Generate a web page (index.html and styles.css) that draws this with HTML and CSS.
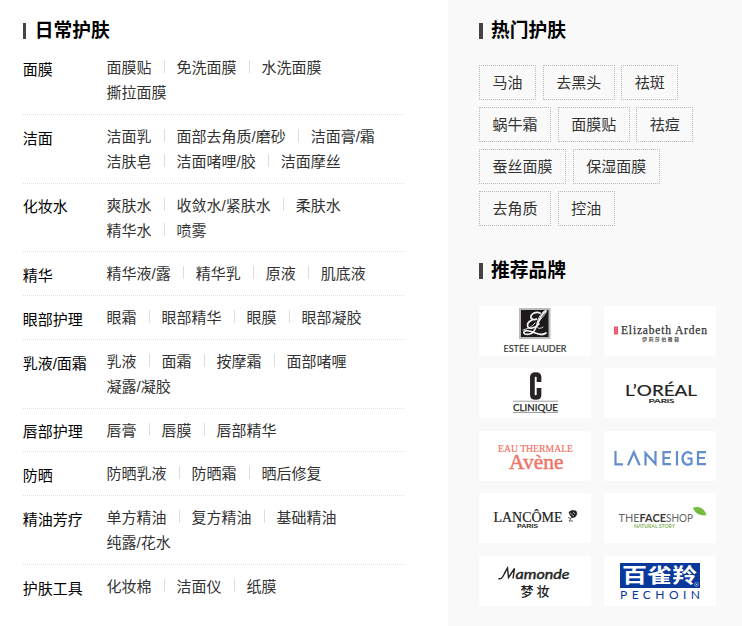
FILE: index.html
```html
<!DOCTYPE html>
<html lang="zh-CN">
<head>
<meta charset="utf-8">
<title>护肤</title>
<link rel="stylesheet" href="styles.css">
</head>
<body>
<div class="page">
  <main class="daily">
    <h2 class="title">日常护肤</h2>
    <dl class="category"><dt>面膜</dt><dd><p><a>面膜贴</a><a>免洗面膜</a><a>水洗面膜</a></p><p><a>撕拉面膜</a></p></dd></dl>
    <dl class="category"><dt>洁面</dt><dd><p><a>洁面乳</a><a>面部去角质/磨砂</a><a>洁面膏/霜</a></p><p><a>洁肤皂</a><a>洁面啫哩/胶</a><a>洁面摩丝</a></p></dd></dl>
    <dl class="category"><dt>化妆水</dt><dd><p><a>爽肤水</a><a>收敛水/紧肤水</a><a>柔肤水</a></p><p><a>精华水</a><a>喷雾</a></p></dd></dl>
    <dl class="category"><dt>精华</dt><dd><p><a>精华液/露</a><a>精华乳</a><a>原液</a><a>肌底液</a></p></dd></dl>
    <dl class="category"><dt>眼部护理</dt><dd><p><a>眼霜</a><a>眼部精华</a><a>眼膜</a><a>眼部凝胶</a></p></dd></dl>
    <dl class="category"><dt>乳液/面霜</dt><dd><p><a>乳液</a><a>面霜</a><a>按摩霜</a><a>面部啫喱</a></p><p><a>凝露/凝胶</a></p></dd></dl>
    <dl class="category"><dt>唇部护理</dt><dd><p><a>唇膏</a><a>唇膜</a><a>唇部精华</a></p></dd></dl>
    <dl class="category"><dt>防晒</dt><dd><p><a>防晒乳液</a><a>防晒霜</a><a>晒后修复</a></p></dd></dl>
    <dl class="category"><dt>精油芳疗</dt><dd><p><a>单方精油</a><a>复方精油</a><a>基础精油</a></p><p><a>纯露/花水</a></p></dd></dl>
    <dl class="category"><dt>护肤工具</dt><dd><p><a>化妆棉</a><a>洁面仪</a><a>纸膜</a></p></dd></dl>
  </main>
  <aside class="side">
    <h2 class="title">热门护肤</h2>
    <div class="tags">
      <a>马油</a><a>去黑头</a><a>祛斑</a><a>蜗牛霜</a><a>面膜贴</a><a>祛痘</a><a>蚕丝面膜</a><a>保湿面膜</a><a>去角质</a><a>控油</a>
    </div>
    <h2 class="title">推荐品牌</h2>
    <div class="brands">
      <svg viewBox="0 0 112 50">
        <rect x="40" y="2" width="31.500" height="31" fill="#bbb"/><rect x="42" y="4" width="27.500" height="27" fill="#1d1a19"/>
        <g fill="none" stroke="#f3f3f3" stroke-linecap="round"><path stroke-width="1.700" d="M61 7c-4-2-10 1-9 5 1 2 4 2 6 1-6 0-11 4-9 8 2 3 8 0 11-3M67 5c-6 3-8 14-12 20-2 3-6 4-9 3-3-2 0-4 4-3 6 1 12 6 17 2"/><path stroke-width=".9" d="M59 17c3-5 9-10 8-12s-7 4-9 12c-1 5 2 7 6 4M44 24c6-2 9-3 12-7"/></g>
        <text class="light" x="24.500" y="46.300" font-size="9.800" textLength="63" lengthAdjust="spacingAndGlyphs" fill="#333" stroke="#333" stroke-width=".2">ESTĒE LAUDER</text>
      </svg>
      <svg viewBox="0 0 112 50">
        <rect x="10" y="20.500" width="4" height="8" fill="#f0526f"/><path d="M11 22.500h2M11 24.500h2M11 26.500h2" stroke="#fff" stroke-width=".4" stroke-opacity=".5"/>
        <text class="serif" x="17" y="28" font-size="11.500" textLength="86" fill="#333" stroke="#333" stroke-width=".25">Elizabeth Arden</text>
        <text class="cjk" x="38" y="35.300" font-size="5" font-weight="700" textLength="37" fill="#555">伊莉莎伯雅顿</text>
      </svg>
      <svg viewBox="0 0 112 50">
        <path d="M60 14V9q0-2.500-3.300-2.500T53.400 9v18q0 2.500 3.300 2.500T60 27v-7" fill="none" stroke="#282322" stroke-width="4.700"/>
        <path d="M34 33.200h45M34 44.500h45" stroke="#888" stroke-width=".8"/>
        <text class="light" x="34" y="42.500" font-size="10.300" textLength="45" lengthAdjust="spacingAndGlyphs" fill="#222" stroke="#222" stroke-width=".25">CLINIQUE</text>
      </svg>
      <svg viewBox="0 0 112 50">
        <text class="light" x="21" y="28.200" font-size="16" textLength="72" lengthAdjust="spacingAndGlyphs" fill="#222" stroke="#222" stroke-width=".2">L’ORÉAL</text>
        <text class="light" x="44.500" y="35.300" font-size="5.800" textLength="26" lengthAdjust="spacingAndGlyphs" fill="#222" stroke="#222" stroke-width=".2">PARiS</text>
      </svg>
      <svg viewBox="0 0 112 50" fill="#ed7567">
        <text class="serif" x="19" y="20.500" font-size="10.500" textLength="75" lengthAdjust="spacingAndGlyphs" stroke="#ed7567" stroke-width=".2">EAU THERMALE</text>
        <text class="serif" x="30" y="38" font-size="21" textLength="54.500" lengthAdjust="spacingAndGlyphs" stroke="#ed7567" stroke-width=".45">Avène</text>
      </svg>
      <svg viewBox="0 0 112 50">
        <g fill="none" stroke="#628dce" stroke-width="2.200"><path d="M11.500 20v13.300H19M24 34.300l5.800-13 5.800 13M41.500 34.500V22l10 11V20M67 21.200h-7.500v12H67M59.500 27H66M73 20v14.500M88 23c-5-4.500-9.500 0-9.500 4.500 0 6 5.500 7.500 9 5V27.500h-4M102 21.200h-8v12h8M94 27h7"/></g>
      </svg>
      <svg viewBox="0 0 112 50">
        <text class="serif" x="14.500" y="29" font-size="14" textLength="69" lengthAdjust="spacingAndGlyphs" fill="#222" stroke="#222" stroke-width=".2">LANCÔME</text>
        <text class="sans" x="38" y="34.700" font-size="4.700" font-weight="700" textLength="21" lengthAdjust="spacingAndGlyphs" fill="#222">PARIS</text>
        <path d="M90 19l3-1.500 4 .5 1 3-2 3-3 .5-2-2.500zM93 24l-3 4M89 24.500l3 1M90 28h4" fill="#222" stroke="#222" stroke-width=".7"/><path d="M91 20l4 3M94 19l2 2" stroke="#fff" stroke-width=".6"/>
      </svg>
      <svg viewBox="0 0 112 50">
        <text class="light" x="14.500" y="28.500" font-size="10.500" textLength="21" lengthAdjust="spacingAndGlyphs" fill="#666">THE</text>
        <text class="light" x="35.500" y="28.500" font-size="10.500" font-weight="700" textLength="26.500" lengthAdjust="spacingAndGlyphs" fill="#3e3b3a">FACE</text>
        <text class="light" x="62" y="28.500" font-size="10.500" textLength="27" lengthAdjust="spacingAndGlyphs" fill="#666">SHOP</text>
        <text class="light" x="30" y="35" font-size="4.700" font-weight="700" textLength="41" lengthAdjust="spacingAndGlyphs" fill="#87b660">NATURAL STORY</text>
        <path d="M89 15c4-2 11-1 13.500 7-6 1-11-1-13.500-7z" fill="#72b83a"/><path d="M89 15c5 1 9 3 13.500 7" stroke="#8cc857" stroke-width=".8" fill="none"/>
      </svg>
      <svg viewBox="0 0 112 50">
        <path d="M19.500 22.500c2 1 4-1 5.500-4s2.500-5 3.500-6.500l1 9.500 6-9-1.500 10" fill="none" stroke="#222" stroke-width="1.400"/>
        <text class="light" x="36.500" y="22.500" font-size="13" font-style="italic" textLength="54" lengthAdjust="spacingAndGlyphs" fill="#222" stroke="#222" stroke-width=".4">amonde</text>
        <text class="cjk" x="41.500" y="39.500" font-size="13" font-weight="500" textLength="29" fill="#222">梦妆</text>
      </svg>
      <svg viewBox="0 0 112 50">
        <rect x="16" y="7" width="80" height="25" fill="#08399a"/>
        <text class="cjk" x="18" y="27" font-size="20.500" font-weight="700" textLength="75" lengthAdjust="spacingAndGlyphs" fill="#fff">百雀羚</text>
        <circle cx="92.500" cy="28.500" r="1.900" fill="#08399a" stroke="#b8c9e8" stroke-width=".6"/><circle cx="92.500" cy="28.500" r=".6" fill="#fff"/>
        <text class="light" x="16" y="42.700" font-size="12" textLength="80" fill="#08399a">PECHOIN</text>
      </svg>
    </div>
  </aside>
</div>
</body>
</html>
```
FILE: styles.css
```css
* { box-sizing: border-box; }
body {
  margin: 0;
  background: #fff;
  color: #333;
  font: 15px/25px "Liberation Sans", "Noto Sans CJK SC", sans-serif;
}
.page { display: flex; width: 742px; height: 626px; overflow: hidden; }
.daily { width: 448px; padding: 18px 44px 0 22.700px; }
.side { width: 294px; padding: 18px 0 0 31px; background: #f9f9f9; }
.title {
  display: flex;
  align-items: center;
  gap: 9px;
  height: 26px;
  margin: 0;
  color: #000;
  font-size: 18.75px;
  line-height: 28px;
}
.title::before { content: ""; width: 3px; height: 16px; background: #444; }
.side .title { gap: 8px; }
.side .title::before { width: 4px; }
.title + .category { margin-top: 2.125px; }
.category {
  display: flex;
  margin: 0;
  padding: 8.875px 0;
  border-bottom: 1px dotted #ddd;
}
.category:last-child { border-bottom: 0; }
.category dt { width: 83.800px; padding-top: 1.750px; height: 25px; color: #000; white-space: nowrap; }
.category dd { margin: 0; }
.category p { display: flex; height: 25px; margin: 0; white-space: nowrap; }
.category a { display: flex; }
.category a + a::before {
  content: "";
  width: 1px;
  height: 13px;
  margin: 5px 12px 0;
  background: #ddd;
}
.tags { display: flex; flex-wrap: wrap; gap: 7px 6.500px; width: 225px; margin-top: 21px; }
.tags a {
  height: 35px;
  padding: 0 12.550px;
  border: 1px dotted #bbb;
  line-height: 33px;
  white-space: nowrap;
}
.tags + .title { margin-top: 32px; }
.brands {
  display: grid;
  grid-template-columns: 112px 112px;
  gap: 12.450px 13px;
  margin-top: 22px;
}
.brands svg { display: block; width: 112px; height: 50px; background: #fff; }
.sans { font-family: "Liberation Sans", sans-serif; }
.serif { font-family: "Liberation Serif", serif; }
.light { font-family: Lato, sans-serif; }
.cjk { font-family: "Noto Sans CJK SC", sans-serif; }
```
